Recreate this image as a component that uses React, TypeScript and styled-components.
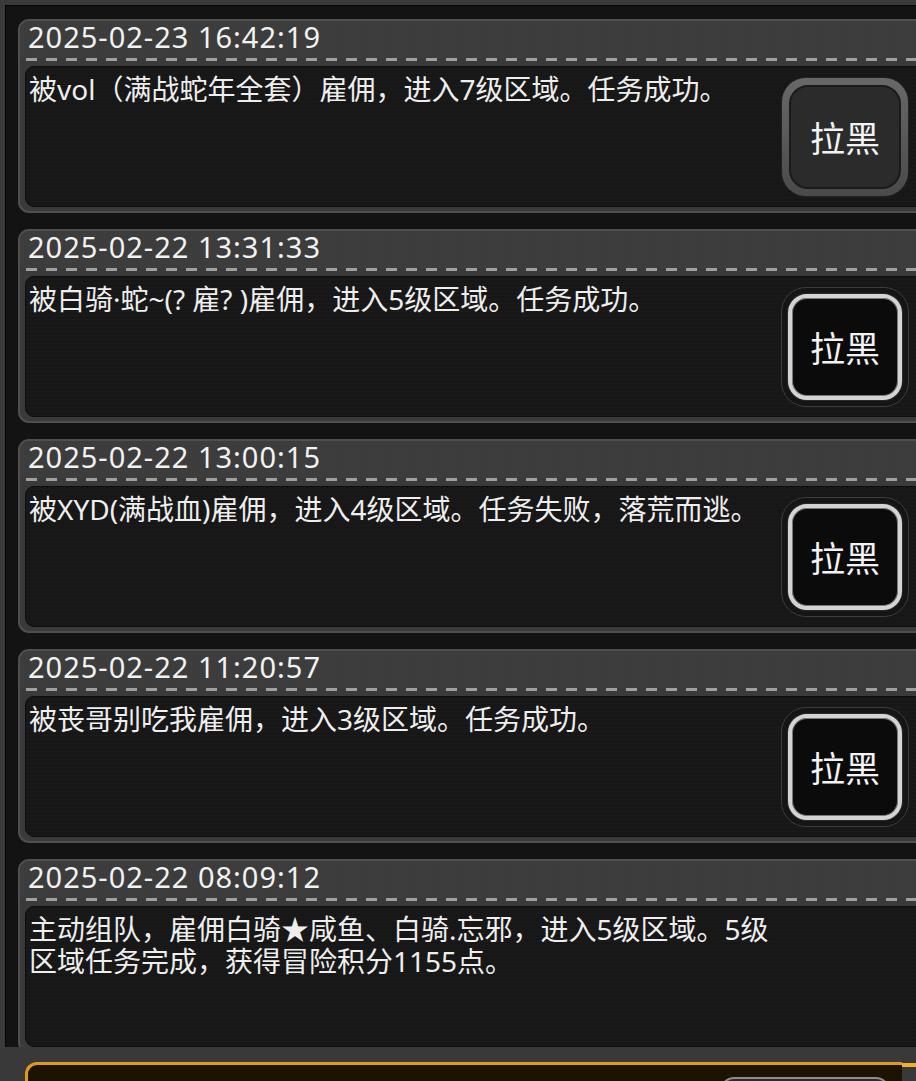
import React from 'react';
import styled, { createGlobalStyle, css } from 'styled-components';

type Entry = {
  time: string;
  text: string;
  button?: 'active' | 'normal';
};

const entries: Entry[] = [
  {
    time: '2025-02-23 16:42:19',
    text: '被vol（满战蛇年全套）雇佣，进入7级区域。任务成功。',
    button: 'active',
  },
  {
    time: '2025-02-22 13:31:33',
    text: '被白骑·蛇~(? 雇? )雇佣，进入5级区域。任务成功。',
    button: 'normal',
  },
  {
    time: '2025-02-22 13:00:15',
    text: '被XYD(满战血)雇佣，进入4级区域。任务失败，落荒而逃。',
    button: 'normal',
  },
  {
    time: '2025-02-22 11:20:57',
    text: '被丧哥别吃我雇佣，进入3级区域。任务成功。',
    button: 'normal',
  },
  {
    time: '2025-02-22 08:09:12',
    text: '主动组队，雇佣白骑★咸鱼、白骑.忘邪，进入5级区域。5级区域任务完成，获得冒险积分1155点。',
  },
];

const GlobalStyle = createGlobalStyle`
  html, body {
    margin: 0;
    padding: 0;
    background: #393939;
    overflow: hidden;
  }
  body {
    font-family: "Noto Sans", "Noto Sans CJK SC", sans-serif;
    color: #f1f1f1;
  }
`;

const Page = styled.div`
  width: 916px;
  height: 1081px;
  overflow: hidden;
  display: flex;
  flex-direction: column;
  background: #393939;
`;

const Frame = styled.div`
  flex: none;
  width: 950px;
  height: 1047px;
  box-sizing: border-box;
  border-top: 5px solid #3a3a3a;
  border-left: 5px solid #3a3a3a;
  background: #131313;
  box-shadow: inset 1px 1px 0 #050505;
  padding: 14px 0 0 13px;
  overflow: hidden;
`;

const List = styled.div`
  display: flex;
  flex-direction: column;
  gap: 16px;
`;

const Card = styled.div`
  flex: none;
  height: 194px;
  box-sizing: border-box;
  border: 2px solid #4f4f4f;
  border-radius: 11px;
  background: #3a3a3a;
  display: flex;
  flex-direction: column;
`;

const Header = styled.div`
  flex: none;
  height: 37px;
  padding-left: 8px;
  border-radius: 9px 9px 0 0;
  font-size: 29px;
  line-height: 31px;
  letter-spacing: 1px;
  color: #f2f2f2;
  background:
    repeating-linear-gradient(90deg, rgba(255, 255, 255, 0.012) 0 1px, transparent 1px 3px),
    #3c3c3c;
`;

const Dash = styled.div`
  flex: none;
  height: 3px;
  margin: 0 0 0 6px;
  background: repeating-linear-gradient(90deg, #a0a0a0 0 11px, transparent 11px 20px);
`;

const Body = styled.div`
  flex: 1;
  margin: 5px 5px 4px 5px;
  border-radius: 9px;
  border: 1px solid #0d0d0d;
  background:
    repeating-linear-gradient(0deg, rgba(255, 255, 255, 0.01) 0 1px, transparent 1px 4px),
    #171717;
  display: flex;
  align-items: center;
`;

const Text = styled.div`
  flex: none;
  align-self: flex-start;
  width: 755px;
  box-sizing: border-box;
  padding: 6px 0 0 3px;
  font-size: 28px;
  line-height: 32px;
  color: #eeeeee;
`;

const BlockButton = styled.button<{ $variant: 'active' | 'normal' }>`
  flex: none;
  width: 128px;
  height: 120px;
  box-sizing: border-box;
  padding: 0;
  border-radius: 25px;
  cursor: pointer;
  font-family: "Noto Sans CJK SC", sans-serif;
  font-size: 35px;
  color: #f3f3f3;
  display: flex;

  ${({ $variant }) =>
    $variant === 'active'
      ? css`
          border: 1px solid #222;
          background: linear-gradient(180deg, #686868 0%, #4a4a4a 100%);
          padding: 7px;
        `
      : css`
          border: 1px solid #3c3c3c;
          background: #151515;
          padding: 6px;
        `}
`;

const Face = styled.span<{ $variant: 'active' | 'normal' }>`
  flex: 1;
  border-radius: 19px;
  display: flex;
  align-items: center;
  justify-content: center;

  ${({ $variant }) =>
    $variant === 'active'
      ? css`
          background: #2b2b2b;
          border: 2px solid #1b1b1b;
        `
      : css`
          background: #0b0b0b;
          border: 4px solid #d4d4d4;
          box-shadow: inset 0 0 0 1px #7a7a7a, 0 0 0 1px #2a2a2a;
        `}
`;

const Footer = styled.div`
  flex: 1;
  display: flex;
  align-items: flex-start;
  padding: 15px 0 0 25px;
`;

const OrangeBox = styled.div`
  flex: none;
  width: 877px;
  height: 40px;
  box-sizing: border-box;
  border-top: 3px solid #e09a1e;
  border-left: 3px solid #e09a1e;
  border-top-left-radius: 12px;
  background: #1c1302;
  display: flex;
  justify-content: flex-end;
  padding: 12px 12px 0 0;
`;

const Accent = styled.div`
  flex: 1;
  height: 4px;
  margin-top: 1px;
  background: #f2ae2c;
`;

const FooterButton = styled.div`
  width: 170px;
  height: 30px;
  box-sizing: border-box;
  border: 2px solid #8c8c8c;
  border-bottom: none;
  border-radius: 14px 14px 0 0;
  background: #2c2c2c;
`;

export default function App() {
  return (
    <>
      <GlobalStyle />
      <Page>
        <Frame>
          <List>
            {entries.map((e) => (
              <Card key={e.time}>
                <Header>{e.time}</Header>
                <Dash />
                <Body>
                  <Text>{e.text}</Text>
                  {e.button && (
                    <BlockButton $variant={e.button}>
                      <Face $variant={e.button}>拉黑</Face>
                    </BlockButton>
                  )}
                </Body>
              </Card>
            ))}
          </List>
        </Frame>
        <Footer>
          <OrangeBox>
            <FooterButton />
          </OrangeBox>
          <Accent />
        </Footer>
      </Page>
    </>
  );
}
